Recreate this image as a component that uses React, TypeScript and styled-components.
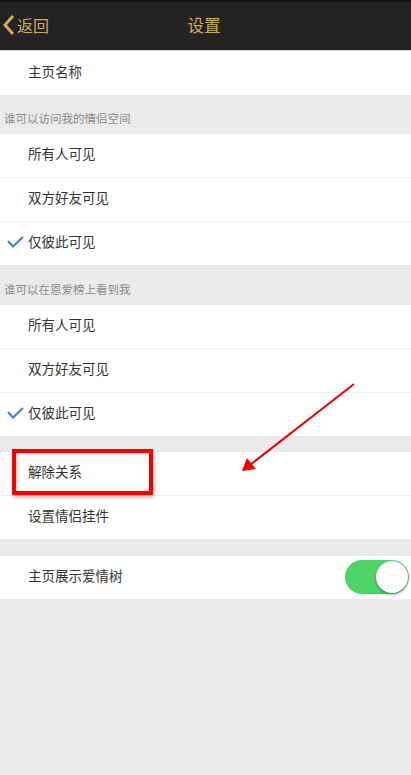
import React from "react";
import styled, { createGlobalStyle } from "styled-components";

const Global = createGlobalStyle`
  html, body { margin: 0; padding: 0; background: #ebebeb; }
  body { font-family: "Noto Sans CJK SC", "Noto Sans", sans-serif; }
`;

const Page = styled.div`
  position: relative;
  width: 411px;
  min-height: 775px;
  background: #ebebeb;
  display: flex;
  flex-direction: column;
`;

const StatusStrip = styled.div`
  height: 2px;
  background: #141414;
`;

const NavBar = styled.div`
  height: 49px;
  box-sizing: border-box;
  padding-bottom: 2px;
  background: #232323;
  border-bottom: 1px solid #d8d8d8;
  display: flex;
  align-items: center;
  position: relative;
`;

const Back = styled.div`
  display: flex;
  align-items: center;
  color: #d2a95d;
  font-size: 16px;
  padding-left: 2px;
  gap: 2px;
`;

const Title = styled.div`
  position: absolute;
  left: 0;
  right: 0;
  padding-right: 3px;
  text-align: center;
  color: #d2a95d;
  font-size: 16.5px;
  pointer-events: none;
`;

const Group = styled.div`
  background: #fff;
  display: flex;
  flex-direction: column;
`;

const Row = styled.div<{ $h?: number }>`
  height: ${(p) => p.$h ?? 43}px;
  box-sizing: border-box;
  padding-bottom: 5px;
  display: flex;
  align-items: center;
  position: relative;
  padding-left: 28px;
  color: #333;
  font-size: 13.5px;
  & + & {
    border-top: 1px solid #efefef;
    height: ${(p) => (p.$h ?? 43) + 1}px;
  }
`;

const Check = styled.svg`
  position: absolute;
  left: 7px;
  top: 50%;
  margin-top: -8px;
`;

const SectionHeader = styled.div<{ $h: number }>`
  height: ${(p) => p.$h}px;
  display: flex;
  align-items: flex-end;
  padding: 0 0 8px 4px;
  box-sizing: border-box;
  color: #8a8a8a;
  font-size: 11.5px;
`;

const Gap = styled.div<{ $h: number }>`
  height: ${(p) => p.$h}px;
`;

const Toggle = styled.div`
  position: absolute;
  right: 2px;
  top: 50%;
  margin-top: -18px;
  width: 64px;
  height: 34px;
  border-radius: 17px;
  background: #4dd366;
`;

const Knob = styled.div`
  position: absolute;
  right: 1px;
  top: 1px;
  width: 32px;
  height: 32px;
  border-radius: 50%;
  background: #fff;
  box-shadow: 0 2px 3px rgba(0, 0, 0, 0.3);
`;

const RedBox = styled.div`
  position: absolute;
  left: 12px;
  top: 449px;
  width: 141px;
  height: 46px;
  box-sizing: border-box;
  border: 4px solid #f20000;
  box-shadow: 1px 2px 4px rgba(0, 0, 0, 0.35), inset 1px 1px 3px rgba(0, 0, 0, 0.25);
`;

const Arrow = styled.svg`
  position: absolute;
  left: 0;
  top: 0;
  pointer-events: none;
`;

const CheckMark = () => (
  <Check width="17" height="12" viewBox="0 0 17 12">
    <polyline points="1,5 6,10.5 16,1" fill="none" stroke="#3f7bd1" strokeWidth="2" />
  </Check>
);

export default function App() {
  return (
    <Page>
      <Global />
      <StatusStrip />
      <NavBar>
        <Back>
          <svg width="13" height="22" viewBox="0 0 13 22">
            <polyline points="11,2 3,11 11,20" fill="none" stroke="#d2a95d" strokeWidth="3" />
          </svg>
          <span>返回</span>
        </Back>
        <Title>设置</Title>
      </NavBar>
      <Group>
        <Row $h={44}>主页名称</Row>
      </Group>
      <SectionHeader $h={39}>谁可以访问我的情侣空间</SectionHeader>
      <Group>
        <Row>所有人可见</Row>
        <Row>双方好友可见</Row>
        <Row>
          <CheckMark />
          仅彼此可见
        </Row>
      </Group>
      <SectionHeader $h={40}>谁可以在恩爱榜上看到我</SectionHeader>
      <Group>
        <Row>所有人可见</Row>
        <Row>双方好友可见</Row>
        <Row>
          <CheckMark />
          仅彼此可见
        </Row>
      </Group>
      <Gap $h={16} />
      <Group>
        <Row>解除关系</Row>
        <Row>设置情侣挂件</Row>
      </Group>
      <Gap $h={17} />
      <Group>
        <Row>
          主页展示爱情树
          <Toggle>
            <Knob />
          </Toggle>
        </Row>
      </Group>
      <RedBox />
      <Arrow width="411" height="775" viewBox="0 0 411 775">
        <line x1="354" y1="384" x2="250" y2="465" stroke="#ee0000" strokeWidth="2" />
        <polygon points="242,471 247,458 256,469" fill="#ee0000" />
      </Arrow>
    </Page>
  );
}
